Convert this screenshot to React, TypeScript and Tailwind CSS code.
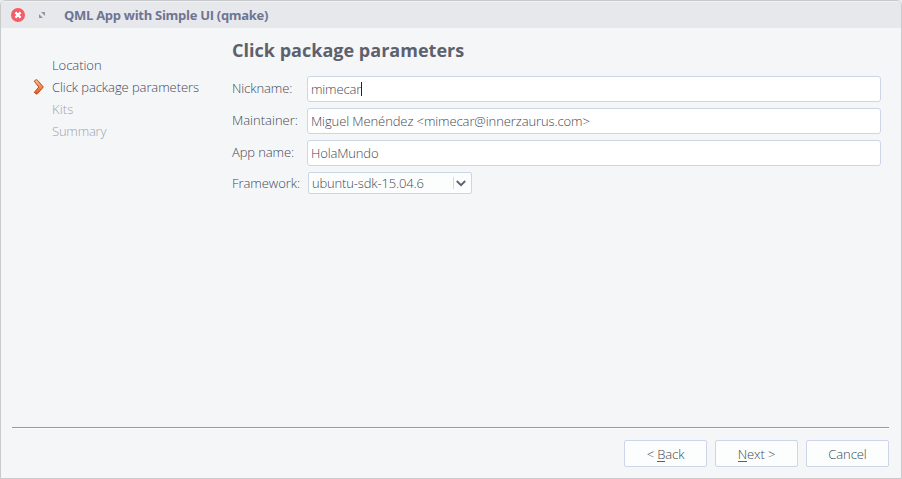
import type { ReactNode } from "react";

const steps = [
  { label: "Location", state: "done", tracking: "tracking-[-0.05px]" },
  { label: "Click package parameters", state: "current", tracking: "tracking-[-0.08px]" },
  { label: "Kits", state: "pending", tracking: "tracking-[0.1px]" },
  { label: "Summary", state: "pending", tracking: "tracking-[-0.2px]" },
];

function Field({ label, tracking, children }: { label: string; tracking: string; children: ReactNode }) {
  return (
    <div className="flex h-[26px]">
      <label className={`w-[75px] shrink-0 pt-[3px] leading-[18px] ${tracking}`}>{label}</label>
      <div className="flex flex-1 items-center rounded-[3px] border border-[#cdd6e8] bg-white pl-[3px] leading-[18px]">
        {children}
      </div>
    </div>
  );
}

function Button({ children }: { children: ReactNode }) {
  return (
    <button className="flex h-[27px] w-[83px] items-center justify-center whitespace-pre rounded-[2px] border border-[#cdd6e8] bg-[#fcfdfd] leading-[18px] tracking-[-0.1px]">
      {children}
    </button>
  );
}

function Mnemonic({ children }: { children: string }) {
  return <span className="h-[18px] bg-[linear-gradient(#5c616c,#5c616c)] bg-[length:100%_1px] bg-[position:0_16px] bg-no-repeat leading-[18px]">{children}</span>;
}

export default function App() {
  return (
    <div className="h-[479px] w-[902px] bg-[#ececee]">
      <div className="flex h-full flex-col overflow-hidden rounded-t-[5px] border border-[#c9cacc] bg-[#f5f6f8] font-['Open_Sans','Noto_Sans',sans-serif] text-[13px] font-light text-[#434853]">
        <header className="flex h-[27px] shrink-0 items-center border-t border-[#f1f1f3] bg-[#e7e8eb] pl-[10px]">
          <svg width="14" height="14" viewBox="0 0 14 14">
            <circle cx="7" cy="7" r="7" fill="#f35d68" />
            <path d="M4.4 4.4l5.2 5.2M9.6 4.4l-5.2 5.2" stroke="#fff" strokeWidth="2.2" />
          </svg>
          <svg className="ml-[14px]" width="6" height="6" viewBox="0 0 6 6" fill="#91949e">
            <path d="M2 0h4v4zM0 2l4 4H0z" />
          </svg>
          <h1 className="ml-[19px] pt-px font-bold tracking-[-0.29px] text-[#6e7491]">QML App with Simple UI (qmake)</h1>
        </header>

        <main className="flex flex-1">
          <nav className="w-[231px] shrink-0 pl-[32px] pt-[26px]">
            {steps.map((s) => (
              <div key={s.label} className={`flex h-[22px] items-center ${s.state === "pending" ? "text-[#a0a3aa]" : ""}`}>
                <span className="w-[19px]">
                  {s.state === "current" && (
                    <svg width="12" height="16" viewBox="0 0 12 16">
                      <defs>
                        <linearGradient id="arrow" x1="0" y1="0" x2="0" y2="1">
                          <stop offset="0" stopColor="#fbc58a" />
                          <stop offset="1" stopColor="#e9541f" />
                        </linearGradient>
                      </defs>
                      <path d="M1.2 2.2L3 .8q.8-.4 1.4.3L10.3 8l-5.8 6.7q-.7.7-1.5.1l-1.7-1.4L5.8 8z" fill="url(#arrow)" stroke="#bd4a16" strokeLinejoin="round" />
                    </svg>
                  )}
                </span>
                <span className={`pt-[2px] ${s.tracking}`}>{s.label}</span>
              </div>
            ))}
          </nav>

          <section className="flex-1 pr-[20px] pt-[9px]">
            <h2 className="mb-[12px] h-[27px] text-[18px] font-bold leading-[27px] tracking-[0.02px] text-[#5c616c]">Click package parameters</h2>
            <form className="flex flex-col gap-[6px]">
              <Field label="Nickname:" tracking="tracking-[-0.1px]">
                <span className="tracking-[-0.15px]">mimecar</span>
                <span className="h-[14px] w-px bg-[#20242c]" />
              </Field>
              <Field label="Maintainer:" tracking="tracking-[0px]">
                <span className="tracking-[-0.1px]">Miguel Menéndez &lt;mimecar@innerzaurus.com&gt;</span>
              </Field>
              <Field label="App name:" tracking="tracking-[-0.1px]">
                <span className="tracking-[-0.15px]">HolaMundo</span>
              </Field>
              <div className="flex h-[22px]">
                <label className="w-[76px] pt-[2px] leading-[18px] tracking-[-0.05px]">Framework:</label>
                <div className="flex w-[164px] items-center rounded-[2px] border border-[#cdd6e8] bg-[#fcfdfd] pl-[3px]">
                  <span className="flex-1 leading-[18px] tracking-[-0.16px]">ubuntu-sdk-15.04.6</span>
                  <span className="h-[12px] w-px bg-[#d6d9df]" />
                  <svg className="ml-[2px] mr-[5px]" width="10" height="7" viewBox="0 0 10 7" fill="none" stroke="#5c616c" strokeWidth="1.8">
                    <path d="M.8 1L5 5.2 9.2 1" />
                  </svg>
                </div>
              </div>
            </form>
          </section>
        </main>

        <footer className="ml-[11px] mr-[12px] h-[51px] shrink-0 border-t border-[#999b9f]">
          <div className="flex justify-end gap-[8px] border-t border-[#fcfcfd] pt-[11px]">
            <Button>{"< "}<Mnemonic>B</Mnemonic>ack</Button>
            <Button><Mnemonic>N</Mnemonic>{"ext >"}</Button>
            <Button>Cancel</Button>
          </div>
        </footer>
      </div>
    </div>
  );
}
